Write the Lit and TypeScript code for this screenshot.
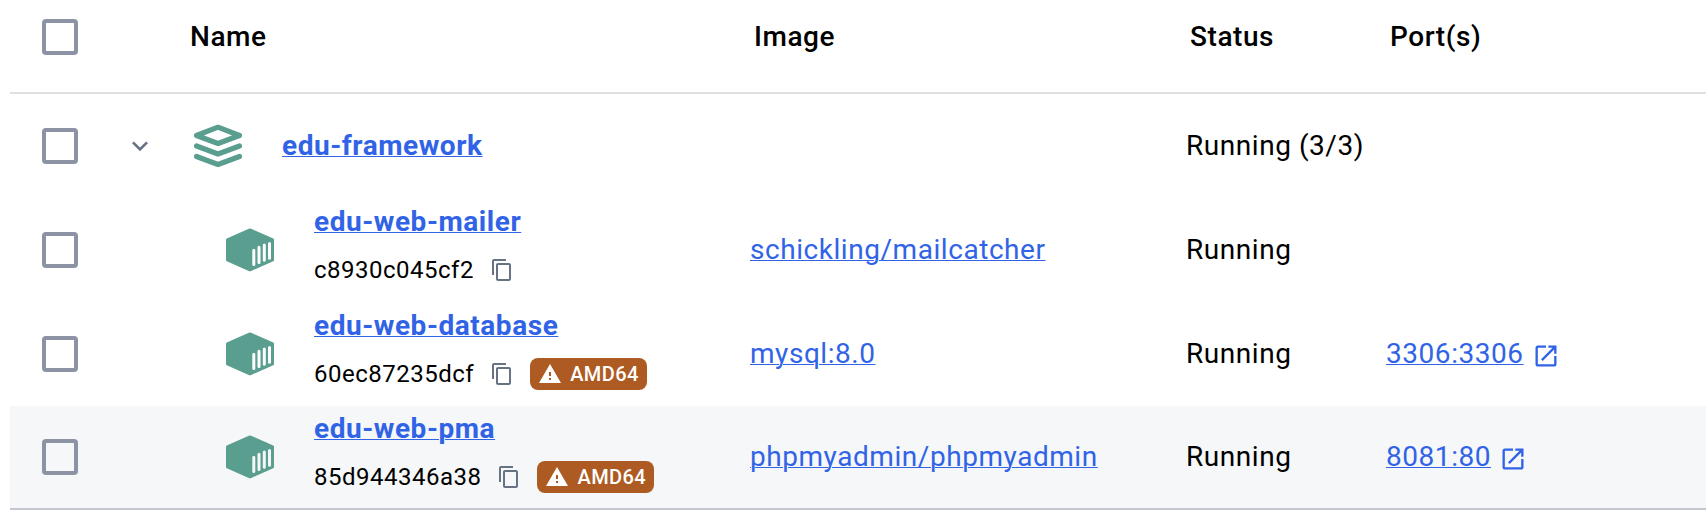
import { LitElement, html, css, svg, nothing } from "lit";
import { customElement, property } from "lit/decorators.js";
import { classMap } from "lit/directives/class-map.js";

interface Container {
  name: string;
  id: string;
  image: string;
  status: string;
  port?: string;
  arch?: string;
  hovered?: boolean;
}

const containers: Container[] = [
  { name: "edu-web-mailer", id: "c8930c045cf2", image: "schickling/mailcatcher", status: "Running" },
  { name: "edu-web-database", id: "60ec87235dcf", image: "mysql:8.0", status: "Running", port: "3306:3306", arch: "AMD64" },
  { name: "edu-web-pma", id: "85d944346a38", image: "phpmyadmin/phpmyadmin", status: "Running", port: "8081:80", arch: "AMD64", hovered: true },
];

const shapes = {
  chevron: svg`<path fill="currentColor" d="M16.59 8.59 12 13.17 7.41 8.59 6 10l6 6 6-6z"/>`,
  copy: svg`<path fill="currentColor" d="M16 1H4c-1.1 0-2 .9-2 2v14h2V3h12V1zm3 4H8c-1.1 0-2 .9-2 2v14c0 1.1.9 2 2 2h11c1.1 0 2-.9 2-2V7c0-1.1-.9-2-2-2zm0 16H8V7h11v14z"/>`,
  warning: svg`<path fill="currentColor" d="M1 21h22L12 2 1 21zm12-3h-2v-2h2v2zm0-4h-2v-4h2v4z"/>`,
  open: svg`<path fill="currentColor" d="M19 19H5V5h7V3H5c-1.11 0-2 .9-2 2v14c0 1.1.89 2 2 2h14c1.1 0 2-.9 2-2v-7h-2v7zM14 3v2h3.59l-9.83 9.83 1.41 1.41L19 6.41V10h2V3h-7z"/>`,
  stack: svg`<g fill="none" stroke="currentColor" stroke-width="2.55" stroke-linejoin="round" stroke-linecap="round">
    <path d="M12 2.6 22.75 6.75 12 10.75 1.25 6.75z"/>
    <path d="M1.25 12 12 16 22.75 12"/>
    <path d="M1.25 17.25 12 21.25 22.75 17.25"/>
  </g>`,
  container: svg`<path fill="currentColor" d="M11.4 1.4q.6-.25 1.2 0L23.6 6.2q.4.2.4.6v10.2q0 .4-.4.6L12.6 22.5q-.6.25-1.2 0L.4 17.6q-.4-.2-.4-.6V6.8q0-.4.4-.6z"/>
    <path class="slats" d="M13.9 12.1v7.2M16.5 10.6v7.6M19.15 9.5v7.6M21.75 8.7v7.4"/>`,
};

@customElement("ui-icon")
class UiIcon extends LitElement {
  @property() name: keyof typeof shapes = "copy";
  static styles = css`
    :host { display: inline-flex; flex: none; width: 24px; height: 24px; }
    svg { width: 100%; height: 100%; display: block; }
    .slats { fill: none; stroke: var(--row-bg, #fff); stroke-width: 1.5; stroke-linecap: round; }
  `;
  render() {
    return html`<svg viewBox="0 0 24 24">${shapes[this.name]}</svg>`;
  }
}

@customElement("app-root")
class AppRoot extends LitElement {
  static styles = css`
    :host {
      display: block;
      height: 528px;
      overflow: hidden;
      background: #fff;
      color: #000;
      font-family: Roboto, sans-serif;
      font-size: 28px;
      line-height: 40px;
      letter-spacing: 0.55px;
    }
    .table { margin-left: 10px; }
    .row {
      display: grid;
      grid-template-columns: 108px 72px 560px 436px 200px 1fr;
      align-items: center;
      box-sizing: border-box;
      height: 104px;
      white-space: nowrap;
    }
    .head {
      height: 94px;
      padding-bottom: 18px;
      border-bottom: 2px solid #e0e0e0;
      font-weight: 500;
    }
    .head .inset { padding-left: 4px; }
    .hovered {
      --row-bg: #f5f7f9;
      background: #f5f7f9;
      border-bottom: 2px solid #c4c8d1;
    }
    .check {
      box-sizing: border-box;
      width: 36px;
      height: 36px;
      margin-left: 32px;
      border: 4px solid #8b93a5;
      border-radius: 4px;
    }
    .chevron { width: 32px; height: 32px; margin-left: 6px; color: #677285; }
    .namecell { display: flex; align-items: center; gap: 40px; padding-left: 4px; }
    .child { padding-left: 36px; }
    .glyph { width: 48px; height: 48px; color: #5a9e8f; }
    .info { display: flex; flex-direction: column; align-items: flex-start; gap: 13px; padding-bottom: 12px; }
    .link {
      color: #3163e7;
      text-decoration: underline;
      text-decoration-thickness: 1px;
      text-underline-offset: 1px;
    }
    .name { font-weight: 700; }
    .info .name { line-height: 39px; }
    .meta { display: flex; align-items: center; gap: 16px; height: 32px; font-size: 24px; line-height: 32px; letter-spacing: 0.5px; }
    .copy { color: #677285; }
    .badge {
      display: flex;
      align-items: center;
      gap: 8px;
      height: 32px;
      padding: 0 8px;
      border-radius: 8px;
      background: #ad5b22;
      color: #fff;
      font-size: 20px;
      font-weight: 500;
      letter-spacing: 0.42px;
    }
    .ports { display: flex; align-items: center; gap: 8px; color: #3163e7; }
    .open { width: 28px; height: 28px; margin-top: 3px; }
  `;

  private row(c: Container) {
    return html`<div class=${classMap({ row: true, hovered: !!c.hovered })}>
      <div class="check"></div>
      <div></div>
      <div class="namecell child">
        <ui-icon class="glyph" name="container"></ui-icon>
        <div class="info">
          <a class="link name">${c.name}</a>
          <div class="meta">
            <span>${c.id}</span>
            <ui-icon class="copy" name="copy"></ui-icon>
            ${c.arch ? html`<span class="badge"><ui-icon name="warning"></ui-icon><span>${c.arch}</span></span>` : nothing}
          </div>
        </div>
      </div>
      <div><a class="link">${c.image}</a></div>
      <div>${c.status}</div>
      <div class="ports">
        ${c.port ? html`<a class="link">${c.port}</a><ui-icon class="open" name="open"></ui-icon>` : nothing}
      </div>
    </div>`;
  }

  render() {
    return html`<div class="table">
      <div class="row head">
        <div class="check"></div>
        <div></div>
        <div>Name</div>
        <div class="inset">Image</div>
        <div class="inset">Status</div>
        <div class="inset">Port(s)</div>
      </div>
      <div class="row">
        <div class="check"></div>
        <ui-icon class="chevron" name="chevron"></ui-icon>
        <div class="namecell">
          <ui-icon class="glyph" name="stack"></ui-icon>
          <a class="link name">edu-framework</a>
        </div>
        <div></div>
        <div>Running (3/3)</div>
        <div></div>
      </div>
      ${containers.map((c) => this.row(c))}
    </div>`;
  }
}
